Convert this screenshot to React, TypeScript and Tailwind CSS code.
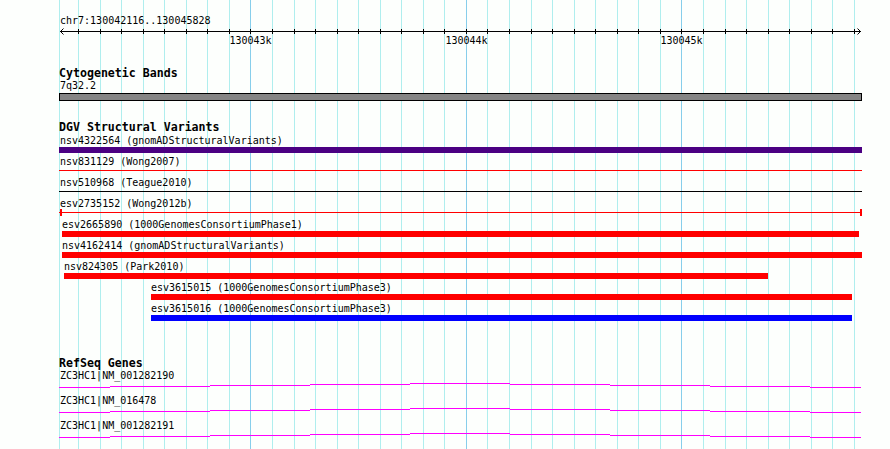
import type { ReactNode } from "react";

const VIEW_START = 130042116;
const VIEW_END = 130045828;
const PX_PER_BP = 800 / (VIEW_END - VIEW_START);
const TRACK_LEFT = 59;
const TRACK_RIGHT = 862;

const toX = (bp: number) => 60.4 + (bp - VIEW_START) * PX_PER_BP;

// every 100bp gets a guide line, every 1kb a darker one
const GRID = Array.from({ length: 37 }, (_, i) => {
  const bp = 130042200 + i * 100;
  return { bp, x: Math.floor(toX(bp)), major: bp % 1000 === 0 };
});

type Variant = {
  name: string;
  source: string;
  start: number;
  end: number;
  kind: "bar" | "line" | "capped";
  color: string;
};

const VARIANTS: Variant[] = [
  { name: "nsv4322564", source: "gnomADStructuralVariants", start: 130030000, end: 130060000, kind: "bar", color: "bg-[#4b0082]" },
  { name: "nsv831129", source: "Wong2007", start: 130030000, end: 130060000, kind: "line", color: "bg-[#ff0000]" },
  { name: "nsv510968", source: "Teague2010", start: 130030000, end: 130060000, kind: "line", color: "bg-black" },
  { name: "esv2735152", source: "Wong2012b", start: 130030000, end: 130060000, kind: "capped", color: "bg-[#ff0000]" },
  { name: "esv2665890", source: "1000GenomesConsortiumPhase1", start: 130042124, end: 130045822, kind: "bar", color: "bg-[#ff0000]" },
  { name: "nsv4162414", source: "gnomADStructuralVariants", start: 130042124, end: 130060000, kind: "bar", color: "bg-[#ff0000]" },
  { name: "nsv824305", source: "Park2010", start: 130042133, end: 130045400, kind: "bar", color: "bg-[#ff0000]" },
  { name: "esv3615015", source: "1000GenomesConsortiumPhase3", start: 130042537, end: 130045789, kind: "bar", color: "bg-[#ff0000]" },
  { name: "esv3615016", source: "1000GenomesConsortiumPhase3", start: 130042537, end: 130045789, kind: "bar", color: "bg-[#0000ff]" },
];

const GENES = ["ZC3HC1|NM_001282190", "ZC3HC1|NM_016478", "ZC3HC1|NM_001282191"];

// intron hat, one pixel step per 100px
const HAT: [number, number, number][] = [
  [59, 110, 5], [110, 210, 4], [210, 310, 3], [310, 410, 2], [410, 510, 1],
  [510, 610, 2], [610, 710, 3], [710, 810, 4], [810, 861, 5],
];
const HAT_PATH = HAT.map(([a, b, y]) => `M${a} ${y + 0.5}H${b}`).join("");

function GridBackground() {
  return (
    <svg className="pointer-events-none absolute inset-0 h-[449px] w-[890px]" shapeRendering="crispEdges">
      <rect x={59} y={0} width={1} height={449} fill="#afeeee" />
      {GRID.map((g) => (
        <rect key={g.bp} x={g.x} y={0} width={1} height={449} fill={g.major ? "#87ceeb" : "#afeeee"} />
      ))}
    </svg>
  );
}

function Ruler() {
  return (
    <div className="pt-[15px]">
      <div className="h-[12px] pl-[60px]">chr7:130042116..130045828</div>
      <svg className="block h-[8px] w-[890px]" shapeRendering="crispEdges">
        <rect x={60} y={4} width={801} height={1} fill="#000" />
        {GRID.map((g) => (
          <rect key={g.bp} x={g.x} y={2} width={1} height={5} fill="#000" />
        ))}
        <path d="M63.5 1.5L60.5 4.5L63.5 7.5" stroke="#000" fill="none" shapeRendering="auto" />
        <path d="M857.5 1.5L860.5 4.5L857.5 7.5" stroke="#000" fill="none" shapeRendering="auto" />
      </svg>
      <div className="relative h-[12px]">
        {GRID.filter((g) => g.major).map((g) => (
          <span key={g.bp} className="absolute top-0 -translate-x-1/2" style={{ left: g.x + 0.5 }}>
            {g.bp / 1000}k
          </span>
        ))}
      </div>
    </div>
  );
}

function TrackTitle({ children }: { children: ReactNode }) {
  return <div className="h-[13px] pl-[59px] text-[11.6px] font-bold leading-[13px]">{children}</div>;
}

function VariantRow({ v }: { v: Variant }) {
  const x0 = Math.max(TRACK_LEFT, Math.round(toX(v.start)));
  const x1 = Math.min(TRACK_RIGHT, Math.round(toX(v.end)));
  const labelX = Math.max(60, x0);

  return (
    <div className="h-[21px]">
      <div className="h-[12px] whitespace-pre" style={{ paddingLeft: labelX }}>
        {v.name} ({v.source})
      </div>
      <div className="h-[6px]">
        {v.kind === "bar" && <div className={`h-[6px] ${v.color}`} style={{ marginLeft: x0, width: x1 - x0 }} />}
        {v.kind === "line" && <div className={`mt-[2px] h-px ${v.color}`} style={{ marginLeft: x0, width: x1 - x0 }} />}
        {v.kind === "capped" && (
          <div className={`mt-[2px] flex h-px justify-between pl-px ${v.color}`} style={{ marginLeft: x0, width: x1 - x0 }}>
            <div className={`-mt-[3px] h-[7px] w-[2px] ${v.color}`} />
            <div className={`-mt-[3px] h-[7px] w-[2px] ${v.color}`} />
          </div>
        )}
      </div>
    </div>
  );
}

function GeneRow({ name }: { name: string }) {
  return (
    <div className="h-[25px]">
      <div className="h-[12px] pl-[60px]">{name}</div>
      <svg className="block h-[6px] w-[890px]" shapeRendering="crispEdges">
        <path d={HAT_PATH} stroke="#ff00ff" fill="none" />
      </svg>
    </div>
  );
}

export default function App() {
  return (
    <div className="relative h-[449px] w-[890px] overflow-hidden bg-[#fdfffd] font-['DejaVu_Sans_Mono',monospace] text-[10px] leading-[12px] text-black">
      <GridBackground />

      <div className="relative flex flex-col">
        <Ruler />

        {/* Cytogenetic bands */}
        <section className="mt-[20px]">
          <TrackTitle>Cytogenetic Bands</TrackTitle>
          <div className="h-[12px] pl-[60px]">7q32.2</div>
          <div className="ml-[59px] mt-[1px] h-[8px] w-[803px] border border-black bg-[#858585]" />
        </section>

        {/* DGV */}
        <section className="mt-[20px]">
          <TrackTitle>DGV Structural Variants</TrackTitle>
          <div className="mt-[1px]">
            {VARIANTS.map((v) => (
              <VariantRow key={v.name} v={v} />
            ))}
          </div>
        </section>

        {/* RefSeq */}
        <section className="mt-[33px]">
          <TrackTitle>RefSeq Genes</TrackTitle>
          {GENES.map((g) => (
            <GeneRow key={g} name={g} />
          ))}
        </section>
      </div>
    </div>
  );
}
